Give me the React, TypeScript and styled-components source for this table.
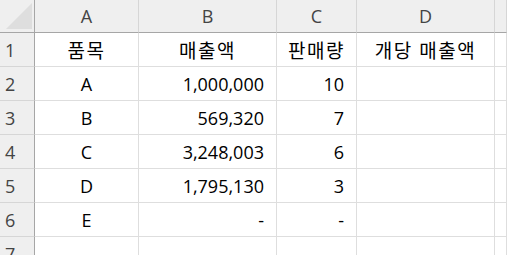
import React from "react";
import styled, { createGlobalStyle } from "styled-components";

const Global = createGlobalStyle`
  html, body { margin: 0; padding: 0; background: #ffffff; overflow: hidden; }
  body { font-family: "Open Sans", "Noto Sans CJK KR", sans-serif; }
`;

const Sheet = styled.div`
  display: grid;
  grid-template-columns: 35px 104px 138px 80px 138px 1fr;
  grid-template-rows: 33px repeat(7, 34px);
  width: 507px;
  height: 255px;
  overflow: hidden;
`;

const Corner = styled.div`
  background: #efefef;
  border-right: 1px solid #a6a6a6;
  border-bottom: 1px solid #a6a6a6;
  box-sizing: border-box;
  display: flex;
  align-items: flex-end;
  justify-content: flex-end;
  padding: 0 2px 3px 0;
`;

const ColHead = styled.div`
  background: #efefef;
  border-right: 1px solid #d6d6d6;
  border-bottom: 1px solid #a6a6a6;
  box-sizing: border-box;
  display: flex;
  align-items: center;
  justify-content: center;
  color: #444444;
  font-size: 18px;
  padding-bottom: 1px;
`;

const RowHead = styled.div`
  background: #efefef;
  border-right: 1px solid #a6a6a6;
  border-bottom: 1px solid #d6d6d6;
  box-sizing: border-box;
  display: flex;
  align-items: center;
  padding-left: 5px;
  color: #444444;
  font-size: 18px;
`;

const Cell = styled.div<{ $align?: "left" | "center" | "right"; $kr?: boolean }>`
  border-right: 1px solid #dedede;
  border-bottom: 1px solid #dedede;
  box-sizing: border-box;
  display: flex;
  align-items: center;
  justify-content: ${(p) =>
    p.$align === "right" ? "flex-end" : p.$align === "center" ? "center" : "flex-start"};
  padding-right: ${(p) => (p.$align === "right" ? "12px" : "0")};
  color: #000000;
  font-size: ${(p) => (p.$kr ? "19px" : "18px")};
  letter-spacing: ${(p) => (p.$kr ? "1.5px" : "0")};
  white-space: nowrap;
`;

const cols = ["A", "B", "C", "D", ""];

const rows: { name: string; sales: string; qty: string }[] = [
  { name: "A", sales: "1,000,000", qty: "10" },
  { name: "B", sales: "569,320", qty: "7" },
  { name: "C", sales: "3,248,003", qty: "6" },
  { name: "D", sales: "1,795,130", qty: "3" },
  { name: "E", sales: "-", qty: "-" },
];

export default function App() {
  return (
    <>
      <Global />
      <Sheet>
        <Corner>
          <svg width="26" height="26" viewBox="0 0 26 26">
            <polygon points="0,26 26,0 26,26" fill="#dedede" />
          </svg>
        </Corner>
        {cols.map((c, i) => (
          <ColHead key={i}>{c}</ColHead>
        ))}

        <RowHead>1</RowHead>
        <Cell $align="center" $kr>품목</Cell>
        <Cell $align="center" $kr>매출액</Cell>
        <Cell $align="center" $kr>판매량</Cell>
        <Cell $align="center" $kr>개당 매출액</Cell>
        <Cell />

        {rows.map((r, i) => (
          <React.Fragment key={r.name}>
            <RowHead>{i + 2}</RowHead>
            <Cell $align="center">{r.name}</Cell>
            <Cell $align="right">{r.sales}</Cell>
            <Cell $align="right">{r.qty}</Cell>
            <Cell />
            <Cell />
          </React.Fragment>
        ))}

        <RowHead>7</RowHead>
        <Cell />
        <Cell />
        <Cell />
        <Cell />
        <Cell />
      </Sheet>
    </>
  );
}
